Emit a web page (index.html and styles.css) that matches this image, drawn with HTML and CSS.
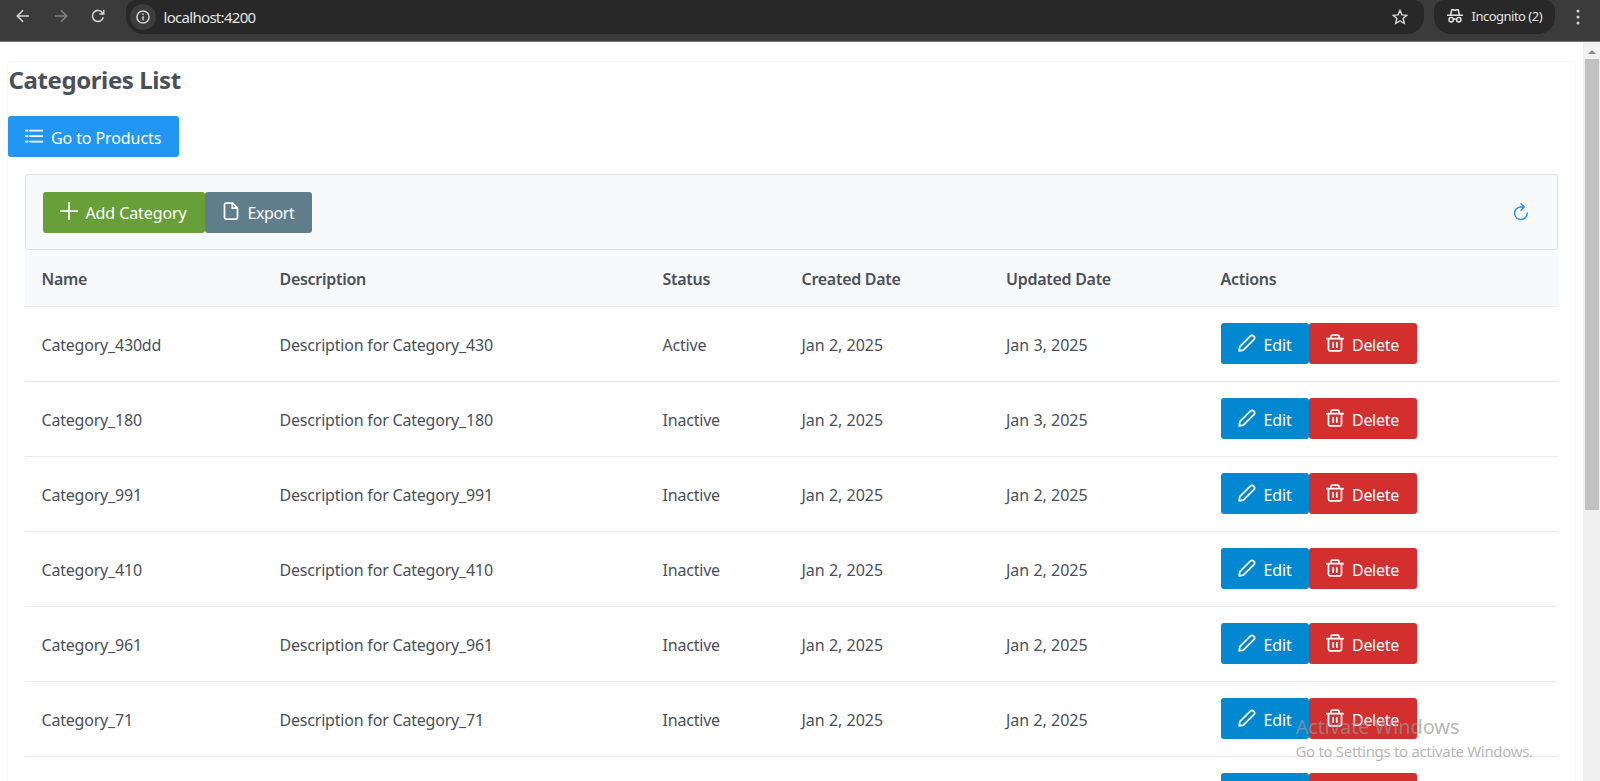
FILE: index.html
```html
<!DOCTYPE html>
<html lang="en">
<head>
<meta charset="utf-8">
<title>Categories</title>
<link rel="stylesheet" href="styles.css">
</head>
<body>
<svg class="sprite" aria-hidden="true">
  <symbol id="pencil" viewBox="0 0 18 18"><path d="M1.2 16.8l.6-4.1L12.600 1.900a1.900 1.900 0 0 1 2.700 0l.8.8a1.900 1.900 0 0 1 0 2.700L5.300 16.200z"/></symbol>
  <symbol id="trash" viewBox="0 0 18 18"><path d="M.8 4.700h16.400M2.500 4.700v10.600a1.600 1.600 0 0 0 1.600 1.600h9.800a1.600 1.600 0 0 0 1.600-1.600V4.700M5 4.700V2.600A1.500 1.500 0 0 1 6.500 1.100h5A1.500 1.500 0 0 1 13 2.600v2.100M7.200 8.500v4.700M10.800 8.500v4.700"/></symbol>
</svg>
<header class="chrome">
  <svg class="nav" viewBox="0 0 14 14"><path d="M13 7H1.500M7 1.300L1.300 7 7 12.700"/></svg>
  <svg class="nav dim" viewBox="0 0 14 14"><path d="M1 7h11.500M7 1.300L12.700 7 7 12.700"/></svg>
  <svg class="nav" viewBox="0 0 14 14"><path d="M12.300 8.300A5.500 5.500 0 1 1 11.500 3.800L12.700 5M12.700 .8V5H8.500"/></svg>
  <div class="address">
    <span class="info"><svg viewBox="0 0 14 14"><circle cx="7" cy="7" r="6.100"/><path d="M7 6.300v4M7 3.500v1.500"/></svg></span>
    <span class="url">localhost:4200</span>
    <svg class="star" viewBox="0 0 16 16"><path d="M8 1.400l1.900 4.500 4.900.4-3.700 3.200 1.100 4.800L8 11.800l-4.200 2.500 1.100-4.800L1.200 6.300l4.900-.4z"/></svg>
  </div>
  <div class="incognito">
    <svg viewBox="0 0 16 16"><path d="M.5 7.200h15M3.700 7l1-5.200h1.500L8 2.300l1.800-.5h1.500l1 5.200M6.500 11.500q1.500-1 3 0"/><circle cx="4.200" cy="11.700" r="2.200"/><circle cx="11.800" cy="11.700" r="2.200"/></svg>
    <span>Incognito (2)</span>
  </div>
  <svg class="dots" viewBox="0 0 4 16"><circle cx="2" cy="2" r="1.500"/><circle cx="2" cy="8" r="1.500"/><circle cx="2" cy="14" r="1.500"/></svg>
</header>
<div class="viewport">
  <main class="card">
    <h2>Categories List</h2>
    <button class="btn products"><svg viewBox="0 0 18 18"><path d="M5 3.500h12.500M5 9h12.500M5 14.500h12.500M.5 3.500h2M.5 9h2M.5 14.500h2"/></svg><span>Go to Products</span></button>
    <section class="panel">
      <div class="toolbar">
        <button class="btn add"><svg viewBox="0 0 18 18"><path d="M9 .8v16.400M.8 9h16.400"/></svg><span>Add Category</span></button>
        <button class="btn export"><svg viewBox="0 0 18 18"><path d="M4 1h6.500l5 5v9.500a1.500 1.500 0 0 1-1.500 1.500H4a1.500 1.500 0 0 1-1.500-1.500v-13A1.500 1.500 0 0 1 4 1zM10.300 1.200v5h5"/></svg><span>Export</span></button>
        <svg class="refresh" viewBox="0 0 16 18"><path d="M7.500 4A6.300 6.300 0 1 0 14.200 10M7.200 4h3.600M8 .8L11.200 4 8 7.200"/></svg>
      </div>
      <div class="row head"><span>Name</span><span>Description</span><span>Status</span><span>Created Date</span><span>Updated Date</span><span>Actions</span></div>
      <div id="rows"></div>
      <div class="next"><i class="btn edit"></i><i class="btn delete"></i></div>
    </section>
  </main>
  <div class="scrollbar"><i class="arrow"></i><i class="thumb"></i></div>
</div>
<aside class="activate"><div class="title">Activate Windows</div><div class="sub">Go to Settings to activate Windows.</div></aside>
<script src="app.js"></script>
</body>
</html>
```
FILE: styles.css
```css
* { box-sizing: border-box; }
body { margin: 0; height: 781px; overflow: hidden; background: #fff; color: #495057; font: 16px/24px "Noto Sans", "Open Sans", sans-serif; }
svg { display: block; flex: none; fill: none; stroke: currentColor; stroke-width: 1.5; stroke-linejoin: round; stroke-linecap: round; }
.sprite { position: absolute; width: 0; height: 0; }
.chrome { height: 42px; background: #3b3b3b; border-bottom: 1px solid #777; display: flex; align-items: flex-start; color: #d2d2d2; padding-left: 16px; }
.nav { width: 14px; height: 14px; margin: 9px 23.500px 0 0; stroke-linecap: butt; stroke-linejoin: miter; stroke-width: 1.600; }
.nav.dim { color: #808080; }
.nav + .address { margin-left: -2.500px; }
.address { width: 1298px; height: 34px; background: #282828; border-radius: 10px 10px 17px 17px; display: flex; align-items: center; padding-left: 4px; }
.info { width: 26px; height: 26px; border-radius: 50%; background: #3c3c3c; display: grid; place-items: center; }
.info svg { width: 14px; height: 14px; stroke-linecap: butt; }
.url { color: #e3e3e3; font-size: 15px; margin-left: 7.500px; letter-spacing: -.7px; flex: 1; }
.star { width: 16px; height: 16px; margin-right: 16px; stroke-linejoin: miter; }
.incognito { margin-left: 10px; width: 121px; height: 34px; background: #282828; border-radius: 10px 10px 17px 17px; display: flex; align-items: center; padding-left: 13px; gap: 8.500px; font-size: 13px; color: #e3e3e3; letter-spacing: -.5px; white-space: nowrap; }
.incognito span { margin-top: -2px; }
.incognito svg { width: 16px; height: 16px; margin-top: -2px; }
.dots { width: 4px; height: 16px; margin: 9px 0 0 21px; fill: currentColor; stroke: none; }
.viewport { display: flex; height: 739px; overflow: hidden; }
.card { margin: 20px 8px 0; width: 1567px; height: 760px; flex: none; border-radius: 4px; box-shadow: 0 0 2px rgba(0,0,0,.14); }
h2 { margin: 0; padding: 1px 0 0 .5px; font-size: 24px; line-height: 34px; font-weight: 700; letter-spacing: -.4px; }
.btn { border: 0; border-radius: 3px; height: 41px; display: flex; align-items: center; gap: 8px; padding: 0 17px; margin: 0; color: #fff; font: inherit; white-space: nowrap; }
.btn svg { width: 18px; height: 18px; margin-top: -2px; stroke-width: 1.750; }
.btn span { letter-spacing: -.1px; padding-top: 2px; }
.products { width: 170.500px; margin-top: 19px; background: #2196f3; }
.panel { margin: 17px 17px 0; }
.toolbar { height: 76px; background: #f8f9fa; border: 1px solid #dee2e6; border-radius: 3px; display: flex; align-items: center; padding: 0 28px 0 16.500px; }
.add { width: 162px; background: #689f38; }
.export { width: 107px; background: #607d8b; }
.export span { letter-spacing: -.4px; }
.refresh { width: 16px; height: 18px; color: #2b8fe6; margin-left: auto; margin-top: -1px; }
.row { height: 75px; display: grid; grid-template-columns: 237.500px 383px 139px 204.500px 214.500px 1fr; align-items: center; padding-left: 17px; border-bottom: 1px solid #e9ecef; white-space: nowrap; }
.row > span { padding-top: 1px; letter-spacing: -.2px; }
.row > span:first-child { margin-left: -.5px; }
.row:not(.head) > span { padding-top: 2px; }
.row > .date { letter-spacing: 0; }
.head { height: 57px; background: #f8f9fa; font-weight: 600; }
.row.head > span { letter-spacing: -.28px; }
.actions { display: flex; margin-top: -1px; }
.edit { width: 88.500px; background: #0288d1; }
.delete { width: 107.500px; background: #d32f2f; }
.delete span { letter-spacing: -.3px; }
.next { display: flex; padding: 16px 0 0 1195.500px; }
.scrollbar { width: 17px; flex: none; background: #f0f0f0; display: flex; flex-direction: column; align-items: center; }
.arrow { border: 4px solid transparent; border-top: 0; border-bottom: 4px solid #8b8b8b; margin: 8px 0 5px; }
.thumb { width: 14px; height: 451px; background: #c1c1c1; }
.activate { position: absolute; left: 1295.500px; top: 712px; color: rgba(150,150,150,.7); white-space: nowrap; }
.title { font-size: 20px; line-height: 30px; letter-spacing: -.08px; }
.sub { font-size: 15px; line-height: 18px; letter-spacing: -.32px; }
```
FILE: app.js
```js
const data = [
  ["Category_430dd", "430", "Active", "Jan 3, 2025"],
  ["Category_180", "180", "Inactive", "Jan 3, 2025"],
  ["Category_991", "991", "Inactive", "Jan 2, 2025"],
  ["Category_410", "410", "Inactive", "Jan 2, 2025"],
  ["Category_961", "961", "Inactive", "Jan 2, 2025"],
  ["Category_71", "71", "Inactive", "Jan 2, 2025"]
];
document.getElementById("rows").innerHTML = data.map(([name, id, status, updated]) => `
  <div class="row"><span>${name}</span><span>Description for Category_${id}</span><span>${status}</span><span class="date">Jan 2, 2025</span><span class="date">${updated}</span>
  <div class="actions"><button class="btn edit"><svg><use href="#pencil"/></svg><span>Edit</span></button><button class="btn delete"><svg><use href="#trash"/></svg><span>Delete</span></button></div></div>`).join("");
```
